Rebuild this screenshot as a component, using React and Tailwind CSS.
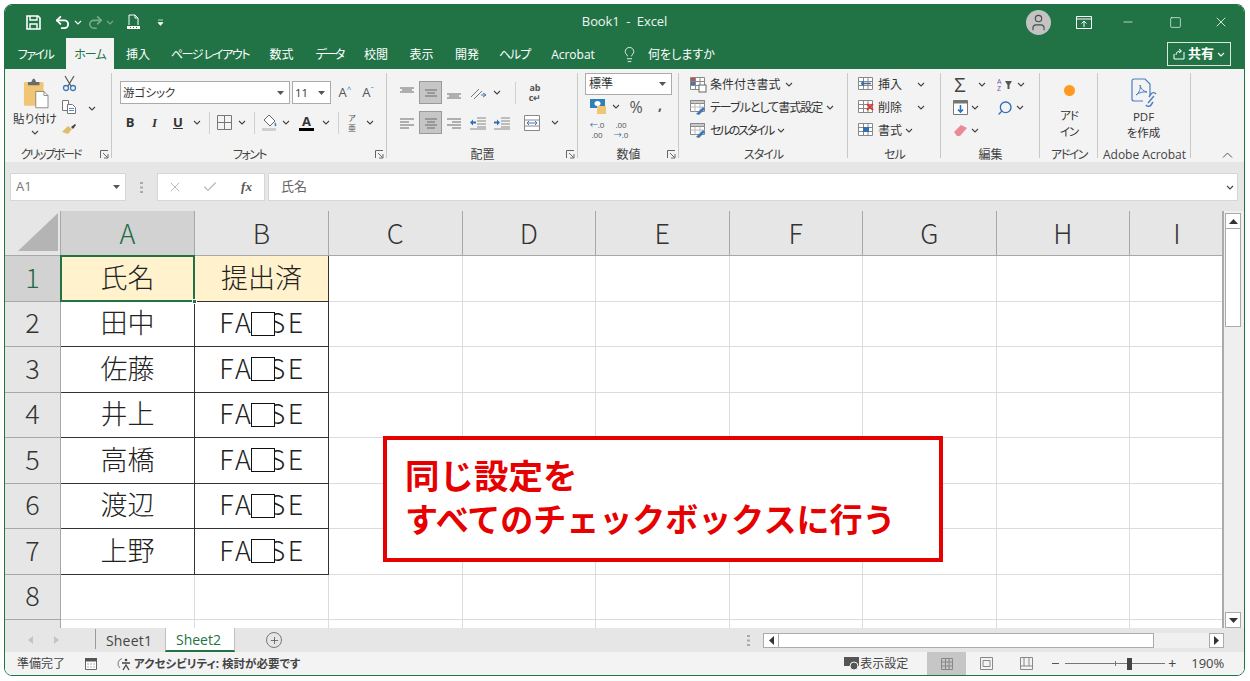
import { Undo2, Redo2, Lightbulb, Search, X, Minus, Square, Check, User, Plus } from 'lucide-react'

const Chev = ({ color = '#444' }) => (
  <svg width="8" height="5" viewBox="0 0 8 5" className="shrink-0">
    <path d="M1 1l3 3 3-3" fill="none" stroke={color} strokeWidth="1.1" />
  </svg>
)

const Caret = () => (
  <svg width="7" height="4" viewBox="0 0 7 4" className="shrink-0">
    <path d="M0 0h7L3.5 4z" fill="#555" />
  </svg>
)

const S = ({ w, className = '', children }) => (
  <span className={`${w} ${className} flex items-center justify-center shrink-0`}>{children}</span>
)

const Tab = ({ w, className = '', children }) => (
  <S w={w} className={`pt-[2px] ${className}`}>{children}</S>
)

const VSep = () => <span className="block w-px h-[22px] bg-[#d0d0d0]" />

const Launcher = () => (
  <svg width="9" height="9" viewBox="0 0 9 9">
    <path d="M.5 8V.5H8M3 3l4.5 4.5M4 8h4V4" fill="none" stroke="#666" />
  </svg>
)

const Group = ({ w, label, launcher, children }) => (
  <div className={`${w} relative flex flex-col h-[89px] shrink-0`}>
    <div className="flex-1 min-h-0">{children}</div>
    <div className="h-[15px] text-center text-[12px] leading-[15px] text-[#444] whitespace-nowrap">{label}</div>
    <span className="absolute right-0 top-0 w-px h-[85px] bg-[#c8c8c8]" />
    {launcher && (
      <span className="absolute right-[3px] bottom-[3px] flex">
        <Launcher />
      </span>
    )}
  </div>
)

// alignment icons are just sets of short horizontal lines
const Lines = ({ rows }) => (
  <svg width="16" height="14" viewBox="0 0 16 14">
    {rows.map(([x1, x2, y]) => (
      <path key={y} d={`M${x1} ${y}H${x2}`} stroke="#6b6b6b" strokeWidth="1" />
    ))}
  </svg>
)

const GridIcon = ({ children }) => (
  <svg width="18" height="17" viewBox="0 0 18 17">
    <path d="M1.5 1.5h14v12h-14zM1.5 5.500h14M1.5 9.500h14M6.500 1.5v12M11 1.5v12" fill="#fff" stroke="#888" />
    {children}
  </svg>
)

const Clipboard = () => (
  <svg width="28" height="31" viewBox="0 0 34 38">
    <rect x="1" y="5" width="24" height="29" rx="1.5" fill="#f0c574" />
    <path d="M6 5h4l2-4h2l2 4h4v4H6z" fill="#6b6b6b" />
    <path d="M15.5 16.500h10l5 5v15h-15z" fill="#fff" stroke="#777" />
    <path d="M25.5 16.500v5h5" fill="none" stroke="#777" />
  </svg>
)

const Scissors = () => (
  <svg width="15" height="17" viewBox="0 0 15 17">
    <path d="M3 1l6 10M12 1L6 11" stroke="#555" strokeWidth="1.2" fill="none" />
    <circle cx="4" cy="13" r="2.500" fill="none" stroke="#3f78b5" strokeWidth="1.3" />
    <circle cx="11" cy="13" r="2.500" fill="none" stroke="#3f78b5" strokeWidth="1.3" />
  </svg>
)

const CopyIcon = () => (
  <svg width="16" height="16" viewBox="0 0 16 16">
    <path d="M1.5 1.5h6v10h-6z" fill="#fff" stroke="#777" />
    <path d="M6.500 5.500h5l3 3v6h-8z" fill="#fff" stroke="#777" />
    <path d="M8 9.500h5M8 11.500h5" stroke="#5b8cc0" />
  </svg>
)

const Brush = () => (
  <svg width="16" height="13" viewBox="0 0 16 13">
    <path d="M1 10l6-6 4 3-4 5z" fill="#e2bb6f" />
    <path d="M10 5l4-3 1 1-3 4z" fill="#444" />
  </svg>
)

const Fill = () => (
  <svg width="18" height="18" viewBox="0 0 18 18">
    <path d="M8 1l6 6-5 5-6-6z" fill="#fff" stroke="#666" />
    <path d="M14 8c1 2 2 3 1 4s-2-1-1-4z" fill="#2f7fb8" />
    <rect x="1" y="14" width="14" height="3" fill="#cfcfcf" />
  </svg>
)

const TableBrush = () => (
  <svg width="19" height="17" viewBox="0 0 19 17">
    <path d="M1.5 1.5h14v11h-14z" fill="#fff" stroke="#888" />
    <path d="M1.5 1.5h14v3h-14z" fill="#c9c9c9" stroke="#888" />
    <path d="M1.5 8h14M6 4.500v8M11 4.500v8" stroke="#bbb" />
    <path d="M7 15l7-7 2 2-6 6z" fill="#3f78b5" />
  </svg>
)

const SaveIcon = () => (
  <svg width="15" height="15" viewBox="0 0 15 15">
    <path d="M1 1h11l2 2v11H1z" fill="none" stroke="#fff" strokeWidth="1.6" />
    <path d="M4 1v4h7V1M4 14V9h7v5" fill="none" stroke="#fff" strokeWidth="1.4" />
  </svg>
)

const PreviewIcon = () => (
  <svg width="15" height="16" viewBox="0 0 15 16">
    <path d="M3 11V1h6l3 3v7M9 1v3h3" fill="none" stroke="#fff" />
    <rect x="1" y="12" width="13" height="3" fill="#fff" />
    <path d="M4 13.500h1M7 13.500h1M10 13.500h1" stroke="#217346" />
  </svg>
)

const PdfIcon = () => (
  <svg width="30" height="30" viewBox="0 0 30 30">
    <path d="M19 17V6l-5-5H3a2 2 0 0 0-2 2v18a2 2 0 0 0 2 2h9" fill="none" stroke="#4a7fc1" strokeWidth="1.2" />
    <path d="M5 17c3-2 5-6 4-10 1 4 3 6 7 7-4-.5-8 .5-11 3z" fill="none" stroke="#4a7fc1" />
    <path d="M17 25l6-7M15 27a3 3 0 0 0 5 0l2-3M25 16a3 3 0 0 0-5 0l-2 3" fill="none" stroke="#4a7fc1" strokeWidth="1.4" />
  </svg>
)

const SheetGlyph = () => (
  <svg width="12" height="12" viewBox="0 0 12 12">
    <path d="M.5.5h11v11H.5zM.5 4h11M.5 8h11M4.500 .5v11M8 .5v11" fill="none" stroke="#888" />
  </svg>
)

const rowHeads = [1, 2, 3, 4, 5, 6, 7, 8, 9]
const colHeads = ['A', 'B', 'C', 'D', 'E', 'F', 'G', 'H', 'I']
const names = ['氏名', '田中', '佐藤', '井上', '高橋', '渡辺', '上野']

const Ribbon = () => (
  <div className="h-[93px] bg-[#f3f3f3] flex pt-[4px] relative text-[12px] text-[#333]">
    <Group w="w-[107px]" label={<span className="tracking-[-2px] pr-[16px]">クリップボード</span>} launcher>
      <div className="flex h-full">
        <div className="w-[56px] flex flex-col items-center pl-[4px]">
          <span className="flex mt-[5px] ml-[4px]"><Clipboard /></span>
          <span className="text-[11.5px] leading-[16px] mt-[2px] whitespace-nowrap">貼り付け</span>
          <span className="mt-[3px] flex"><Chev /></span>
        </div>
        <div className="flex flex-col w-[22px] items-center pt-[2px] gap-[7px] ml-[-3px]">
          <Scissors />
          <CopyIcon />
          <Brush />
        </div>
        <span className="ml-[8px] mt-[33px] h-fit"><Chev /></span>
      </div>
    </Group>

    <Group w="w-[275px]" label={<span className="tracking-[-1.5px]">フォント</span>} launcher>
      <div className="flex items-center h-[23px] mt-[8px] pl-[8px]">
        <div className="w-[170px] h-[23px] bg-white border border-[#ababab] flex items-center justify-between px-[2px] pr-[5px]">
          <span className="text-[11.5px] leading-none">游ゴシック</span>
          <Caret />
        </div>
        <div className="w-[39px] h-[23px] ml-[2px] bg-white border border-[#ababab] flex items-center justify-between pl-[2px] pr-[5px]">
          <span className="text-[11.5px] leading-none">11</span>
          <Caret />
        </div>
        <S w="w-[22px]" className="ml-[3px] text-[13px] text-[#555]">A<span className="text-[8px] mb-[8px] text-[#2f7fb8]">^</span></S>
        <S w="w-[22px]" className="ml-px text-[13px] text-[#555]">A<span className="text-[8px] mb-[8px] text-[#2f7fb8]">ˇ</span></S>
      </div>
      <div className="flex items-center h-[23px] mt-[7px] pl-[6px]">
        <S w="w-[24px]" className="font-bold text-[13px]">B</S>
        <S w="w-[25px]" className="font-bold italic text-[13px] [font-family:'Liberation_Serif',serif]">I</S>
        <S w="w-[22px]" className="font-bold underline text-[13px]">U</S>
        <S w="w-[16px]"><Chev /></S>
        <S w="w-[8px]"><VSep /></S>
        <S w="w-[22px]">
          <svg width="15" height="15" viewBox="0 0 15 15"><path d="M.5.5h14v14H.5zM7.500.5v14M.5 7.500h14" fill="none" stroke="#777" /></svg>
        </S>
        <S w="w-[14px]"><Chev /></S>
        <S w="w-[10px]"><VSep /></S>
        <S w="w-[22px]"><Fill /></S>
        <S w="w-[10px]"><Chev /></S>
        <S w="w-[31px]">
          <span className="flex flex-col items-center">
            <span className="font-bold text-[13px] leading-[13px]">A</span>
            <span className="block w-[15px] h-[3px] bg-black" />
          </span>
        </S>
        <S w="w-[8px]"><Chev /></S>
        <S w="w-[16px]"><VSep /></S>
        <S w="w-[12px]" className="text-[8px] leading-[10px] text-[#555]">
          <span className="flex flex-col items-center"><span>ア</span><span>亜</span></span>
        </S>
        <S w="w-[24px]"><Chev /></S>
      </div>
    </Group>

    <Group w="w-[191px]" label="配置" launcher>
      <div className="flex items-center h-[23px] mt-[8px] pl-[8px]">
        <S w="w-[24px]"><Lines rows={[[1, 15, 2], [3, 13, 4], [1, 15, 6]]} /></S>
        <S w="w-[23px]" className="h-[23px] bg-[#c6c6c6] border border-[#9a9a9a]"><Lines rows={[[2, 14, 4], [4, 12, 7], [2, 14, 10]]} /></S>
        <S w="w-[23px]"><Lines rows={[[1, 15, 8], [3, 13, 10], [1, 15, 12]]} /></S>
        <S w="w-[26px]">
          <svg width="18" height="16" viewBox="0 0 18 16">
            <path d="M2 12l8-8M5 14l8-8" stroke="#777" />
            <path d="M12 10h5M14 8l3 2-3 2" fill="none" stroke="#3f78b5" />
          </svg>
        </S>
        <S w="w-[12px]"><Chev /></S>
        <S w="w-[25px]"><VSep /></S>
        <S w="w-[14px]" className="text-[9px] leading-[10px] font-bold text-[#555]">
          <span className="flex flex-col items-center"><span>ab</span><span>c↵</span></span>
        </S>
      </div>
      <div className="flex items-center h-[23px] mt-[7px] pl-[8px]">
        <S w="w-[24px]"><Lines rows={[[1, 15, 3], [1, 10, 6], [1, 15, 9], [1, 10, 12]]} /></S>
        <S w="w-[23px]" className="h-[23px] bg-[#c6c6c6] border border-[#9a9a9a]"><Lines rows={[[2, 14, 3], [4, 12, 6], [2, 14, 9], [4, 12, 12]]} /></S>
        <S w="w-[23px]"><Lines rows={[[1, 15, 3], [6, 15, 6], [1, 15, 9], [6, 15, 12]]} /></S>
        <S w="w-[24px]">
          <svg width="17" height="14" viewBox="0 0 17 14">
            <path d="M8 2h9M8 5h9M8 8h9M8 11h9M1 13h16" stroke="#888" />
            <path d="M1 6.500l3-3v2h3v2H4v2z" fill="#2f6fb5" />
          </svg>
        </S>
        <S w="w-[25px]">
          <svg width="17" height="14" viewBox="0 0 17 14">
            <path d="M8 2h9M8 5h9M8 8h9M8 11h9M1 13h16" stroke="#888" />
            <path d="M7 6.500l-3-3v2H1v2h3v2z" fill="#2f6fb5" />
          </svg>
        </S>
        <S w="w-[6px]" />
        <S w="w-[24px]">
          <svg width="16" height="16" viewBox="0 0 16 16">
            <path d="M.5.5h15v15H.5zM.5 5h15M.5 11h15" fill="#fff" stroke="#888" />
            <path d="M3 8h10M3 8l2-2M3 8l2 2M13 8l-2-2M13 8l-2 2" fill="none" stroke="#3f78b5" />
          </svg>
        </S>
        <S w="w-[22px]"><Chev /></S>
      </div>
    </Group>

    <Group w="w-[101px]" label="数値" launcher>
      <div className="w-[87px] h-[22px] ml-[7px] bg-white border border-[#ababab] flex items-center justify-between pl-[3px] pr-[5px]">
        <span className="text-[12px] leading-none">標準</span>
        <Caret />
      </div>
      <div className="flex items-center h-[23px] pl-[10px] text-[#555]">
        <S w="w-[20px]">
          <svg width="18" height="17" viewBox="0 0 18 17">
            <rect x="1" y="1" width="15" height="9" fill="#2f7fb8" />
            <ellipse cx="8.500" cy="5.500" rx="3" ry="2.500" fill="#fff" />
            <rect x="8" y="8" width="9" height="8" fill="#f0c574" />
          </svg>
        </S>
        <S w="w-[16px]"><Chev /></S>
        <S w="w-[24px]" className="text-[16px]">%</S>
        <S w="w-[24px]" className="font-bold text-[14px] mb-[4px]">,</S>
      </div>
      <div className="flex items-center h-[23px] pl-[9px] text-[8px] leading-[10px] text-[#555]">
        <S w="w-[20px]"><span className="flex flex-col items-center"><span><span className="text-[#2f6fb5]">←</span>.0</span><span>.00</span></span></S>
        <S w="w-[4px]" />
        <S w="w-[20px]"><span className="flex flex-col items-center"><span>.00</span><span><span className="text-[#2f6fb5]">→</span>.0</span></span></S>
      </div>
    </Group>

    <Group w="w-[169px]" label={<span className="tracking-[-1px]">スタイル</span>}>
      <div className="flex flex-col pl-[10px]">
        <div className="flex items-center h-[23px]">
          <GridIcon>
            <rect x="2" y="2" width="4" height="3" fill="#c0504d" />
            <rect x="2" y="6" width="4" height="3" fill="#3f78b5" />
            <rect x="10" y="9" width="7" height="7" fill="#fff" stroke="#666" />
          </GridIcon>
          <span className="ml-[3px] mr-[4px]">条件付き書式</span>
          <Chev />
        </div>
        <div className="flex items-center h-[23px]">
          <TableBrush />
          <span className="ml-[2px] mr-[4px] whitespace-nowrap tracking-[-1px]">テーブルとして書式設定</span>
          <Chev />
        </div>
        <div className="flex items-center h-[23px]">
          <TableBrush />
          <span className="ml-[2px] mr-[4px] tracking-[-2px]">セルのスタイル</span>
          <Chev />
        </div>
      </div>
    </Group>

    <Group w="w-[93px]" label={<span className="tracking-[-1px]">セル</span>}>
      <div className="flex flex-col pl-[9px]">
        <div className="flex items-center h-[23px]">
          <GridIcon><path d="M4 7.500h10M4 7.500l3-2M4 7.500l3 2" fill="none" stroke="#2f6fb5" strokeWidth="1.4" /></GridIcon>
          <span className="ml-[3px] w-[39px]">挿入</span>
          <Chev />
        </div>
        <div className="flex items-center h-[23px]">
          <GridIcon><path d="M10 5l6 6M16 5l-6 6" stroke="#d9392e" strokeWidth="1.8" /></GridIcon>
          <span className="ml-[3px] w-[39px]">削除</span>
          <Chev />
        </div>
        <div className="flex items-center h-[23px]">
          <GridIcon><rect x="6" y="5" width="6" height="5" fill="#2f6fb5" /></GridIcon>
          <span className="ml-[3px] w-[27px]">書式</span>
          <Chev />
        </div>
      </div>
    </Group>

    <Group w="w-[99px]" label="編集">
      <div className="flex items-center h-[23px] pl-[11px]">
        <S w="w-[16px]" className="text-[20px] leading-none text-[#444]">Σ</S>
        <S w="w-[22px]" className="ml-[3px]"><Chev /></S>
        <S w="w-[16px]" className="ml-[4px]">
          <svg width="16" height="14" viewBox="0 0 16 14">
            <text x="0" y="6" fontSize="7" fill="#7a4fa3">A</text>
            <text x="0" y="13" fontSize="7" fill="#7a4fa3">Z</text>
            <path d="M8 3h7l-2.500 4v4h-2V7z" fill="#555" />
          </svg>
        </S>
        <S w="w-[14px]" className="ml-[1px]"><Chev /></S>
      </div>
      <div className="flex items-center h-[23px] pl-[11px]">
        <S w="w-[16px]">
          <svg width="15" height="15" viewBox="0 0 15 15">
            <path d="M.5.5h14v14H.5z" fill="#fff" stroke="#777" />
            <path d="M.5.5h14v3H.500z" fill="#777" />
            <path d="M7.500 5v7M5 9.500l2.500 2.500L10 9.500" fill="none" stroke="#2f6fb5" strokeWidth="1.6" />
          </svg>
        </S>
        <S w="w-[14px]"><Chev /></S>
        <S w="w-[18px]" className="ml-[14px]"><Search size={16} color="#2f6fb5" strokeWidth={2} className="-scale-x-100" /></S>
        <S w="w-[12px]"><Chev /></S>
      </div>
      <div className="flex items-center h-[23px] pl-[11px]">
        <S w="w-[16px]">
          <svg width="15" height="13" viewBox="0 0 15 13">
            <path d="M1 8l7-7 6 3-7 8H4z" fill="#ea8a95" />
          </svg>
        </S>
        <S w="w-[14px]"><Chev /></S>
      </div>
    </Group>

    <Group w="w-[58px]" label={<span className="tracking-[-1.5px]">アドイン</span>}>
      <div className="flex flex-col items-center text-[11.5px] leading-[16px]">
        <span className="block w-[11px] h-[11px] mt-[12px] mb-[12px] rounded-full bg-[#ff9a1f]" />
        <span className="tracking-[-1px]">アド</span>
        <span className="tracking-[-1px]">イン</span>
      </div>
    </Group>

    <Group w="w-[93px]" label="Adobe Acrobat">
      <div className="flex flex-col items-center text-[11.5px] leading-[16px] pr-[2px]">
        <span className="mt-[5px] mb-[1px] ml-[4px] flex"><PdfIcon /></span>
        <span>PDF</span>
        <span>を作成</span>
      </div>
    </Group>

    <span className="absolute right-[11px] bottom-[4px] flex">
      <svg width="11" height="6" viewBox="0 0 11 6"><path d="M1 5.500l4.500-4.500L10 5.500" fill="none" stroke="#555" /></svg>
    </span>
  </div>
)

const Sheet = () => (
  <div className="relative w-[1219px] overflow-hidden border-r-2 border-[#ababab] [font-feature-settings:normal]">
    <div className="grid grid-cols-[56px_134px_134px_repeat(6,133.5px)_95px] grid-rows-[45px_repeat(9,45.55px)] [font-family:'Noto_Sans_CJK_JP',sans-serif] text-[27px] text-[#222]">
      <div className="bg-[#e6e6e6] border-r border-b border-[#a8a8a8] flex items-end justify-end pr-[2px] pb-[4px]">
        <svg width="40" height="38" viewBox="0 0 40 38"><path d="M40 0v38H0z" fill="#b4b4b4" /></svg>
      </div>
      {colHeads.map((c, i) => (
        <div
          key={c}
          className={`flex items-center justify-center border-r border-b border-[#a8a8a8] font-light ${i === 0 ? 'bg-[#d2d2d2] text-[#1f6b43]' : 'bg-[#e6e6e6] text-[#333]'}`}
        >
          {c}
        </div>
      ))}
      {rowHeads.map((r) => (
        <div key={r} className="contents">
          <div className={`flex items-center justify-center pb-[3px] border-r border-b border-[#a8a8a8] font-light ${r === 1 ? 'bg-[#d2d2d2] text-[#1f6b43]' : 'bg-[#e6e6e6] text-[#333]'}`}>
            {r < 9 ? r : ''}
          </div>
          {colHeads.map((c, i) => {
            if (r <= 7 && i === 0) {
              return (
                <div key={c} className={`relative flex items-center justify-center pb-[3px] border-r border-b border-[#333] font-light ${r === 1 ? 'bg-[#fff2cc]' : 'bg-white'}`}>
                  {names[r - 1]}
                  {r === 1 && (
                    <>
                      <span className="absolute inset-[-1px] border-2 border-[#217346]" />
                      <span className="absolute right-[-3px] bottom-[-3px] w-[5px] h-[5px] bg-[#217346] border border-white z-10" />
                    </>
                  )}
                </div>
              )
            }
            if (r <= 7 && i === 1) {
              return (
                <div key={c} className={`relative flex items-center justify-center pb-[3px] border-r border-b border-[#333] font-light ${r === 1 ? 'bg-[#fff2cc]' : 'bg-white'}`}>
                  {r === 1 ? '提出済' : <span className="tracking-[2.5px] pl-[2px]">FALSE</span>}
                  {r > 1 && <span className="absolute left-[56px] top-[10px] w-[24px] h-[24px] bg-white border-[1.5px] border-[#111]" />}
                </div>
              )
            }
            return <div key={c} className="bg-white border-r border-b border-[#dcdcdc]" />
          })}
        </div>
      ))}
    </div>
    <div className="absolute left-[378px] top-[225px] w-[560px] h-[126px] bg-white border-4 border-[#e60000] pl-[18px] pt-[12px] [font-family:'Noto_Sans_CJK_JP',sans-serif] font-bold text-[#e60000] text-[33px] leading-[44px] whitespace-nowrap">
      <div className="text-[34.5px]">同じ設定を</div>
      <div>すべてのチェックボックスに行う</div>
    </div>
  </div>
)

export default function App() {
  return (
    <div className="w-[1250px] h-[681px] bg-white pt-[4px] pl-[4px] [font-family:'Open_Sans','Noto_Sans_CJK_JP',sans-serif] [font-feature-settings:'palt']">
      <div className="w-[1241px] h-[672px] border border-[#217346] rounded-[8px] overflow-hidden flex flex-col">
        {/* title bar */}
        <div className="h-[33px] pt-[1px] bg-[#217346] grid grid-cols-[1fr_auto_1fr] items-center text-white shrink-0">
          <div className="flex items-center pl-[21px]">
            <S w="w-[15px]"><SaveIcon /></S>
            <S w="w-[18px]" className="ml-[12px]"><Undo2 size={17} color="#fff" strokeWidth={2.6} /></S>
            <S w="w-[8px]" className="ml-[3px]"><Chev color="#fff" /></S>
            <S w="w-[18px]" className="ml-[4px] opacity-40"><Redo2 size={17} color="#fff" strokeWidth={2.2} /></S>
            <S w="w-[8px]" className="ml-[2px] opacity-40"><Chev color="#fff" /></S>
            <S w="w-[15px]" className="ml-[12px]"><PreviewIcon /></S>
            <S w="w-[7px]" className="ml-[16px]">
              <svg width="7" height="7" viewBox="0 0 7 7"><path d="M1 1h5M1 3.500h5l-2.500 3z" fill="#fff" stroke="#fff" strokeWidth=".7" /></svg>
            </S>
          </div>
          <div className="text-[13px] tracking-[-0.1px] text-[#eef5f0]">Book1&nbsp; -&nbsp; Excel</div>
          <div className="flex items-center justify-end pr-[15px]">
            <span className="w-[25px] h-[25px] rounded-full bg-[#c3c3c3] flex items-center justify-center"><User size={19} color="#4a4a4a" strokeWidth={1.4} /></span>
            <S w="w-[16px]" className="ml-[25px]">
              <svg width="16" height="13" viewBox="0 0 16 13">
                <path d="M.5.5h15v12H.5zM.5 3h15" fill="none" stroke="#fff" />
                <path d="M8 11V5M5.500 7.500L8 5l2.500 2.500" fill="none" stroke="#fff" />
              </svg>
            </S>
            <S w="w-[14px]" className="ml-[29px]"><Minus size={14} color="#fff" strokeWidth={1.2} /></S>
            <S w="w-[14px]" className="ml-[33px]"><Square size={13} color="#fff" strokeWidth={1.2} /></S>
            <S w="w-[16px]" className="ml-[31px]"><X size={16} color="#fff" strokeWidth={1.2} /></S>
          </div>
        </div>

        {/* tabs */}
        <div className="h-[31px] bg-[#217346] flex items-stretch text-[12px] text-white shrink-0">
          <Tab w="w-[61px]" className="tracking-[-1.5px]">ファイル</Tab>
          <Tab w="w-[48px]" className="bg-[#f3f3f3] text-[#217346] tracking-[-1px]">ホーム</Tab>
          <Tab w="w-[48px]">挿入</Tab>
          <Tab w="w-[96px]" className="tracking-[-1.4px]">ページ レイアウト</Tab>
          <Tab w="w-[47px]">数式</Tab>
          <Tab w="w-[49px]" className="tracking-[-2px]">データ</Tab>
          <Tab w="w-[44px]">校閲</Tab>
          <Tab w="w-[47px]">表示</Tab>
          <Tab w="w-[44px]">開発</Tab>
          <Tab w="w-[51px]" className="tracking-[-1px]">ヘルプ</Tab>
          <Tab w="w-[66px]">Acrobat</Tab>
          <Tab w="w-[18px]" className="ml-[14px]"><Lightbulb size={17} color="#fff" strokeWidth={1.2} /></Tab>
          <span className="ml-[10px] pt-[2px] flex items-center">何をしますか</span>
          <span className="ml-auto mr-[13px] mt-[4px] mb-[3px] w-[64px] border border-[#d8e6dd] flex items-center justify-center gap-[3px] font-bold text-[13px]">
            <svg width="12" height="12" viewBox="0 0 12 12"><path d="M1 6v5h10V4M3 7c0-3 2-4 5-4M6 1l2.500 2L6 5" fill="none" stroke="#fff" /></svg>
            共有
            <Chev color="#fff" />
          </span>
        </div>

        <Ribbon />

        {/* formula bar */}
        <div className="h-[49px] bg-[#e6e6e6] pt-[11px] pl-[5px] flex items-start text-[13px] shrink-0">
          <div className="w-[116px] h-[28px] bg-white border border-[#d6d6d6] flex items-center justify-between pl-[5px] pr-[5px] text-[#777]">
            A1
            <Caret />
          </div>
          <S w="w-[31px]" className="h-[28px]">
            <svg width="3" height="11" viewBox="0 0 3 11"><path d="M0 0h3v2H0zM0 4.500h3v2H0zM0 9h3v2H0z" fill="#aaa" /></svg>
          </S>
          <div className="w-[108px] h-[28px] bg-white border border-[#d6d6d6] flex items-center">
            <S w="w-[33px]"><X size={16} color="#b5b5b5" strokeWidth={1.4} /></S>
            <S w="w-[38px]"><Check size={16} color="#b5b5b5" strokeWidth={1.8} /></S>
            <S w="w-[35px]" className="italic font-bold [font-family:'Liberation_Serif',serif] text-[#555]">fx</S>
          </div>
          <div className="w-[970px] h-[28px] ml-[3px] bg-white border border-[#d6d6d6] flex items-center justify-between pl-[12px] pr-[3px] text-[#666]">
            氏名
            <Chev />
          </div>
        </div>

        {/* sheet + vertical scrollbar */}
        <div className="h-[417px] flex shrink-0">
          <Sheet />
          <div className="flex-1 bg-[#efefef] pt-[2px] pl-[1px] pr-[3px] flex flex-col">
            <div className="h-[16px] bg-white border border-[#ababab] flex items-center justify-center">
              <svg width="9" height="5" viewBox="0 0 9 5"><path d="M4.500 0L9 5H0z" fill="#333" /></svg>
            </div>
            <div className="h-[98px] bg-white border border-t-0 border-[#ababab]" />
            <div className="flex-1" />
            <div className="h-[16px] bg-white border border-[#ababab] flex items-center justify-center">
              <svg width="9" height="5" viewBox="0 0 9 5"><path d="M0 0h9L4.500 5z" fill="#333" /></svg>
            </div>
          </div>
        </div>

        {/* sheet tabs */}
        <div className="h-[24px] bg-[#e6e6e6] flex items-stretch text-[14px] text-[#444] shrink-0">
          <S w="w-[26px]" className="ml-[12px]">
            <svg width="5" height="8" viewBox="0 0 5 8"><path d="M5 0v8L0 4z" fill="#c4c4c4" /></svg>
          </S>
          <S w="w-[26px]">
            <svg width="5" height="8" viewBox="0 0 5 8"><path d="M0 0v8l5-4z" fill="#c4c4c4" /></svg>
          </S>
          <span className="block w-px h-[20px] mt-px ml-[26px] bg-[#999]" />
          <S w="w-[69px]" className="pr-[3px] tracking-[0.2px]">Sheet1</S>
          <S w="w-[70px]" className="pr-[3px] bg-white text-[#217346] border-b-2 border-[#217346] border-x border-x-[#c0c0c0]">Sheet2</S>
          <S w="w-[18px]" className="ml-[30px]">
            <span className="w-[16px] h-[16px] rounded-full border border-[#777] flex items-center justify-center"><Plus size={11} color="#666" /></span>
          </S>
          <S w="w-[3px]" className="ml-[464px]">
            <svg width="3" height="11" viewBox="0 0 3 11"><path d="M0 0h3v2H0zM0 4.500h3v2H0zM0 9h3v2H0z" fill="#aaa" /></svg>
          </S>
          <div className="ml-[13px] my-[5px] w-[391px] h-[15px] bg-white border border-[#ababab] flex items-center">
            <S w="w-[15px]" className="h-full border-r border-[#ababab]">
              <svg width="5" height="9" viewBox="0 0 5 9"><path d="M5 0v9L0 4.500z" fill="#333" /></svg>
            </S>
          </div>
          <div className="w-[55px] my-[5px] h-[15px] bg-[#f0f0f0]" />
          <S w="w-[15px]" className="my-[5px] h-[15px] bg-white border border-[#ababab]">
            <svg width="5" height="9" viewBox="0 0 5 9"><path d="M0 0v9l5-4.500z" fill="#333" /></svg>
          </S>
        </div>

        {/* status bar */}
        <div className="flex-1 bg-[#f3f3f3] flex items-stretch text-[12px] text-[#444]">
          <span className="ml-[12px] flex items-center">準備完了</span>
          <S w="w-[12px]" className="ml-[20px]">
            <svg width="12" height="12" viewBox="0 0 12 12">
              <path d="M.5.5h11v11H.5z" fill="#fff" stroke="#666" />
              <path d="M0 0h12v3.500H0z" fill="#555" />
              <path d="M2.500 6h1M5.500 6h1M8.500 6h1M2.500 9h1M5.500 9h1M8.500 9h1" stroke="#555" />
            </svg>
          </S>
          <S w="w-[16px]" className="ml-[19px]">
            <svg width="16" height="14" viewBox="0 0 16 14">
              <path d="M6 1.500a5.500 5.500 0 0 0-2 9.500" fill="none" stroke="#777" />
              <circle cx="10" cy="3" r="1.300" fill="#444" />
              <path d="M6 6h8M7 13l3-5 3 5" fill="none" stroke="#444" strokeWidth="1.3" />
            </svg>
          </S>
          <span className="ml-[2px] flex items-center font-bold text-[11.5px] whitespace-nowrap">アクセシビリティ: 検討が必要です</span>
          <S w="w-[16px]" className="ml-[544px]">
            <svg width="16" height="14" viewBox="0 0 16 14">
              <rect x="0" y="0" width="15" height="9" fill="#555" />
              <circle cx="10" cy="9" r="4" fill="#555" stroke="#f3f3f3" />
            </svg>
          </S>
          <span className="flex items-center whitespace-nowrap">表示設定</span>
          <S w="w-[39px]" className="ml-[19px] bg-[#c6c6c6]"><SheetGlyph /></S>
          <S w="w-[40px]">
            <svg width="13" height="13" viewBox="0 0 13 13"><path d="M.5.5h12v12H.5zM3 3.500h7v6H3z" fill="none" stroke="#888" /></svg>
          </S>
          <S w="w-[40px]">
            <svg width="13" height="13" viewBox="0 0 13 13"><path d="M.5 12.500V.5h12v12zM.5 9h12M4 .5V9M9 .5V9" fill="none" stroke="#888" /></svg>
          </S>
          <S w="w-[8px]" className="ml-[5px]"><span className="block w-[7px] h-px bg-[#555]" /></S>
          <div className="relative w-[100px] ml-[6px] flex items-center">
            <span className="block w-full h-px bg-[#777]" />
            <span className="absolute left-[50px] w-px h-[5px] bg-[#777]" />
            <span className="absolute left-[62px] w-[5px] h-[12px] bg-[#444]" />
          </div>
          <S w="w-[10px]" className="ml-[2px] text-[14px]">+</S>
          <span className="ml-[14px] flex items-center text-[13px]">190%</span>
        </div>
      </div>
    </div>
  )
}
